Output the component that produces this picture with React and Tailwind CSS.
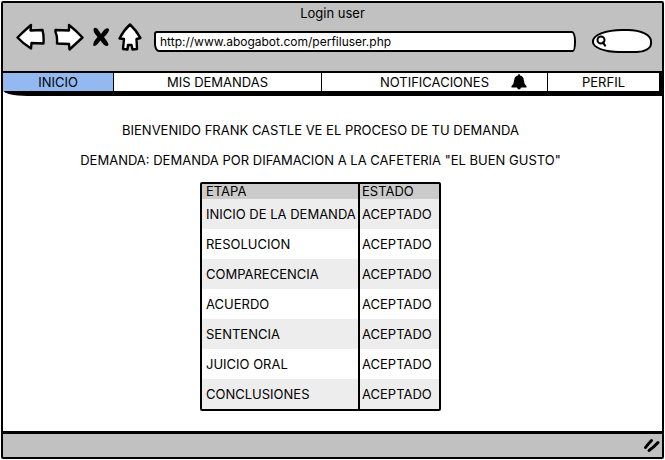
import React from 'react';

const steps = [
  'INICIO DE LA DEMANDA',
  'RESOLUCION',
  'COMPARECENCIA',
  'ACUERDO',
  'SENTENCIA',
  'JUICIO ORAL',
  'CONCLUSIONES',
];

const iconProps = {
  fill: 'white',
  stroke: 'black',
  strokeWidth: 2.4,
  strokeLinejoin: 'round',
  strokeLinecap: 'round',
  'aria-hidden': true,
};

function BackIcon() {
  return (
    <svg width="30" height="28" viewBox="0 0 30 28" {...iconProps}>
      <path d="M1.500 14.500 Q8 8 15 2 L14.500 7.500 L26.500 7 Q28 13 27.500 20.500 L15.500 20 L15 25.500 Q7 20.500 1.500 14.500 Z" />
    </svg>
  );
}

function ForwardIcon() {
  return (
    <svg width="30" height="28" viewBox="0 0 30 28" {...iconProps}>
      <path d="M1.500 7 L15 7.500 L15 2 Q22 7.500 28.500 14.500 L15.500 26.500 L15 21 L3 20.500 Q3.500 13 1.500 9 Z" />
    </svg>
  );
}

function StopIcon() {
  return (
    <svg width="18" height="22" viewBox="0 0 18 22" aria-hidden="true">
      <path d="M2 2 Q5 1 7 5 L9 8 L12 4 Q15 1 17 3 Q17.500 6 12 11 L15.500 16 Q17.500 20 15 20 Q12 20 8.500 14.500 Q4 20.500 1.500 20 Q0 17 5.500 11 Q0 5 2 2 Z" fill="black" />
    </svg>
  );
}

function HomeIcon() {
  return (
    <svg width="24" height="28" viewBox="0 0 24 28" {...iconProps}>
      <path d="M12 1.500 Q18 7 22.500 15 L18.500 16 L19 26 L14.500 26.500 L13.500 22 L10 22 L9.500 26.500 L5 26 L6 16 L1.500 15.500 Q6 7 12 1.500 Z" />
    </svg>
  );
}

function BellIcon() {
  return (
    <svg width="16" height="16" viewBox="0 0 16 16" fill="black" aria-hidden="true">
      <path d="M8 0 Q9 0 9 1.500 Q12.500 2.300 12.800 6 Q13 10 15.500 12 V13.500 H10 Q9.500 15.500 8 15.500 Q6.500 15.500 6 13.500 H0.500 V12 Q3 10 3.200 6 Q3.500 2.300 7 1.500 Q7 0 8 0 Z" />
    </svg>
  );
}

function SearchIcon() {
  return (
    <svg width="12" height="12" viewBox="0 0 12 12" fill="none" stroke="black" strokeLinecap="round" aria-hidden="true">
      <circle cx="5" cy="5" r="3.500" strokeWidth="2" />
      <path d="M7 7.500 L9 10.500" strokeWidth="2.200" />
    </svg>
  );
}

function ResizeIcon() {
  return (
    <svg width="18" height="15" viewBox="0 0 18 15" stroke="black" strokeWidth="3" strokeLinecap="round" fill="none" aria-hidden="true">
      <path d="M1.500 9.500 Q4 6 7.500 2.500" />
      <path d="M5 12.500 Q9 10 14 4.500" />
    </svg>
  );
}

function Tab({ children, className = '' }) {
  return (
    <a href="#" className={`grid grid-cols-[1fr_auto_1fr] items-center border-black leading-4 ${className}`}>
      {children}
    </a>
  );
}

export default function App() {
  return (
    <div className="flex min-h-screen flex-col bg-white p-px font-['Inter','Liberation_Sans',sans-serif] text-[13px] leading-5 text-black">
      <div className="flex grow flex-col rounded-xs border-2 border-black">
        <header className="h-[68px] bg-[#c1c1c1]">
          <h1 className="text-center">Login user</h1>
          <div className="-mt-0.5 flex items-center pr-2.5 pl-[13px]">
            <div className="flex items-center gap-2">
              <button aria-label="Atrás"><BackIcon /></button>
              <button aria-label="Adelante"><ForwardIcon /></button>
            </div>
            <div className="ml-2 flex items-center gap-2">
              <button aria-label="Detener"><StopIcon /></button>
              <button aria-label="Inicio"><HomeIcon /></button>
            </div>
            <input
              aria-label="Dirección"
              defaultValue="http://www.abogabot.com/perfiluser.php"
              className="mt-2 ml-3 h-[21px] min-w-0 grow rounded-[3px_4px_3px_5px/3px_10px_10px_8px] border-2 border-black bg-white px-1 text-xs outline-none"
            />
            <label className="mt-2 ml-4 flex h-6 w-[60px] items-center rounded-[50%_40%_25%_45%/50%_50%_40%_45%] border-2 border-black bg-white pl-0.5">
              <SearchIcon />
              <input aria-label="Buscar" className="w-8 bg-transparent outline-none" />
            </label>
          </div>
        </header>

        <nav className="grid h-[25px] grid-cols-[111fr_208fr_226fr_114fr] rounded-bl-[24px_6px] border-t-2 border-b-[5px] border-black">
          <Tab className="border-r bg-[#94b9f1]"><span className="col-start-2">INICIO</span></Tab>
          <Tab className="border-r"><span className="col-start-2">MIS DEMANDAS</span></Tab>
          <Tab className="border-r">
            <span className="col-start-2">NOTIFICACIONES</span>
            <span className="mr-5 justify-self-end"><BellIcon /></span>
          </Tab>
          <Tab className="border-r-3"><span className="col-start-2">PERFIL</span></Tab>
        </nav>

        <main className="flex grow flex-col items-center pt-6 pr-6 pb-5">
          <p>BIENVENIDO FRANK CASTLE VE EL PROCESO DE TU DEMANDA</p>
          <p className="mt-2.5">DEMANDA: DEMANDA POR DIFAMACION A LA CAFETERIA "EL BUEN GUSTO"</p>
          <table className="mt-3 w-[241px] table-fixed border-separate border-spacing-0 rounded-xs border-2 border-black text-left">
            <thead>
              <tr className="h-[15px] bg-[#cbcbcb] leading-[15px]">
                <th className="w-[158px] border-r-2 border-black px-1 font-normal">ETAPA</th>
                <th className="px-0.5 font-normal">ESTADO</th>
              </tr>
            </thead>
            <tbody>
              {steps.map((step) => (
                <tr key={step} className="h-[30px] whitespace-nowrap odd:bg-[#ededed]">
                  <td className="border-r-2 border-black px-1">{step}</td>
                  <td className="px-0.5">ACEPTADO</td>
                </tr>
              ))}
            </tbody>
          </table>
        </main>

        <footer className="flex h-[26px] items-center justify-end border-t-3 border-black bg-[#c1c1c1]">
          <ResizeIcon />
        </footer>
      </div>
    </div>
  );
}
